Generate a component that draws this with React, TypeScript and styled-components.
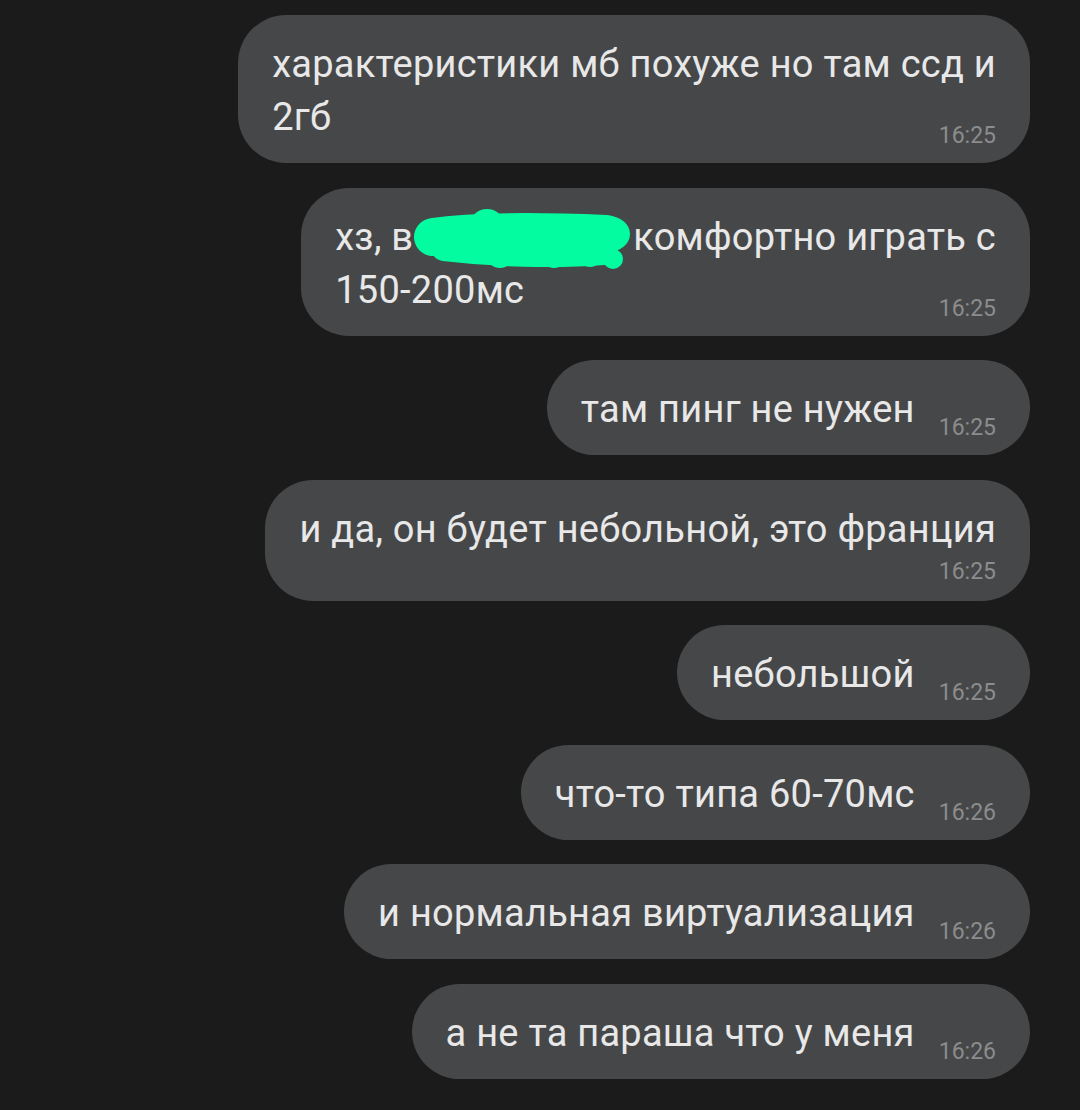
import styled, { createGlobalStyle } from "styled-components";

const GlobalStyle = createGlobalStyle`
  html, body {
    margin: 0;
    padding: 0;
    background: #1b1b1b;
  }
  body {
    font-family: Roboto, "Liberation Sans", sans-serif;
  }
`;

interface Message {
  lines: React.ReactNode[];
  time: string;
  stacked?: boolean; // time does not fit on last line
}

function Scribble() {
  return (
    <Blot width="216" height="62" viewBox="0 0 216 62">
      <g fill="#03fca0" stroke="#03fca0" strokeLinecap="round" strokeLinejoin="round">
        <path d="M19 29 C 60 23, 120 23, 192 26" strokeWidth="38" fill="none" />
        <path d="M30 40 C 80 46, 140 48, 189 44" strokeWidth="26" fill="none" />
        <circle cx="73" cy="19" r="18" stroke="none" />
        <ellipse cx="194" cy="26" rx="22" ry="18" stroke="none" />
        <circle cx="86" cy="46" r="14" stroke="none" />
        <circle cx="140" cy="48" r="12" stroke="none" />
        <circle cx="176" cy="48" r="11" stroke="none" />
        <circle cx="199" cy="51" r="10" stroke="none" />
      </g>
    </Blot>
  );
}

const messages: Message[] = [
  { lines: ["характеристики мб похуже но там ссд и", "2гб"], time: "16:25" },
  {
    lines: [
      <>
        хз, в<Scribble />комфортно играть с
      </>,
      "150-200мс",
    ],
    time: "16:25",
  },
  { lines: ["там пинг не нужен"], time: "16:25" },
  { lines: ["и да, он будет небольной, это франция"], time: "16:25", stacked: true },
  { lines: ["небольшой"], time: "16:25" },
  { lines: ["что-то типа 60-70мс"], time: "16:26" },
  { lines: ["и нормальная виртуализация"], time: "16:26" },
  { lines: ["а не та параша что у меня"], time: "16:26" },
];

export default function App() {
  return (
    <>
      <GlobalStyle />
      <Feed>
        {messages.map((m, i) => {
          const last = m.lines.length - 1;
          return (
            <Bubble key={i} $stacked={m.stacked}>
              {m.lines.slice(0, m.stacked ? undefined : last).map((l, j) => (
                <Line key={j}>{l}</Line>
              ))}
              {m.stacked ? (
                <TimeRow>
                  <Time>{m.time}</Time>
                </TimeRow>
              ) : (
                <LastRow>
                  <Line>{m.lines[last]}</Line>
                  <Time>{m.time}</Time>
                </LastRow>
              )}
            </Bubble>
          );
        })}
      </Feed>
    </>
  );
}

const Feed = styled.div`
  display: flex;
  flex-direction: column;
  align-items: flex-end;
  gap: 24.5px;
  padding: 15px 50px 0 0;
  min-height: 1110px;
  box-sizing: border-box;
`;

const Bubble = styled.div<{ $stacked?: boolean }>`
  display: flex;
  flex-direction: column;
  background: #464749;
  border-radius: 48px;
  padding: 23px 34px ${(p) => (p.$stacked ? "21px" : "19px")};
  color: #e8e8e8;
`;

const Line = styled.div`
  font-size: 38px;
  line-height: 53px;
  letter-spacing: 0.25px;
  white-space: nowrap;
`;

const LastRow = styled.div`
  display: flex;
  align-items: flex-end;
  justify-content: space-between;
  gap: 24px;
`;

const TimeRow = styled.div`
  display: flex;
  justify-content: flex-end;
  margin-top: 4px;
`;

const Time = styled.span`
  font-size: 23px;
  line-height: 24px;
  color: #8c8c8c;
  margin-bottom: -4px;
`;

const Blot = styled.svg`
  vertical-align: middle;
  margin: -8px 3px -8px 1px;
`;
